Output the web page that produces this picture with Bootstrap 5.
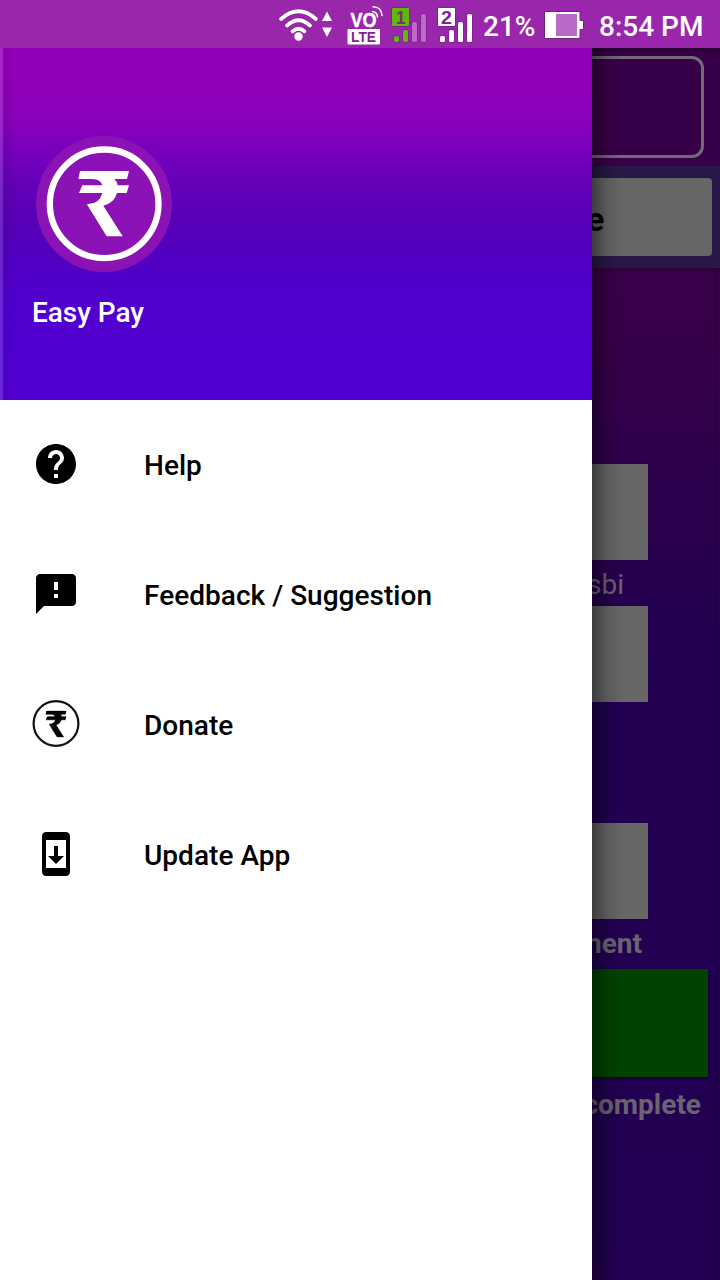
<!DOCTYPE html>
<html lang="en">
<head>
<meta charset="utf-8">
<meta name="viewport" content="width=device-width, initial-scale=1">
<title>Easy Pay</title>
<link rel="stylesheet" href="https://cdn.jsdelivr.net/npm/bootstrap@5.3.0/dist/css/bootstrap.min.css">
<style>
body{font-family:Roboto,"Liberation Sans",sans-serif;width:720px;height:1280px;background:#fff;color:#000}
svg{display:block;flex:none}
.status{height:48px;background:#9a27ab;color:#fff;font-size:28px;font-weight:500;line-height:54px}
.drawer{width:592px;background:#fff}
.drawer-head{height:352px;padding:88px 32px 0 36px;
 background:linear-gradient(90deg,#ffffff28 0 2px,#ffffff10 3px,#00000018 4px,#0000000a 10px,transparent 18px),
 linear-gradient(#9300b9 0,#9300b9 30px,#8b00bd 72px,#7600bd 105px,#6200b8 140px,#5700b8 175px,#5100c4 215px,#5100d0 255px,#5300d2 352px)}
.app-title{color:#fff;font-size:28px;font-weight:500;line-height:34px;margin:24px 0 0 -4px;letter-spacing:-.05px}
.drawer-list .list-group-item{height:130px;padding:0 32px;border:0;color:#000;font-size:28px;font-weight:500;gap:64px;background:none}
.drawer-list svg{margin-bottom:2px}
.drawer-list span{padding-top:2px;letter-spacing:.03px}
.behind{width:128px;background:#220052}
.behind-top{height:118px;padding:8px 16px 8px 0;background:linear-gradient(#2b0036,#39004a 8px)}
.outline-box{border:3px solid #726a76;border-left:0;border-radius:0 12px 12px 0}
.behind-tab{height:102px;padding:12px 8px 12px 0;background:#281848}
.tab-btn{background:#666;border-radius:0 4px 4px 0;color:#000;font-size:34px;font-weight:700;line-height:82px;height:78px}
.behind-form{height:1012px;background:linear-gradient(90deg,transparent 122px,#0002 123px 125px,transparent 126px),linear-gradient(#2f003a 0,#3a0049 5px,#38004a 100px,#2c004c 210px,#2a004d 270px,#240050 350px,#210052 440px,#220053 1012px)}
.field{width:56px;height:96px;background:#666}
.hint{font-size:28px;height:46px;line-height:50px;color:#6b6470;width:128px;direction:rtl;white-space:nowrap}
.pay{width:116px;height:108px;background:#004200;box-shadow:0 2px 3px #0006}
.edge-shade{width:30px;left:0;top:0;height:100%;background:linear-gradient(90deg,#0006,#0002 50%,transparent)}
</style>
<script src="https://cdn.jsdelivr.net/npm/bootstrap@5.3.0/dist/js/bootstrap.bundle.min.js"></script>
</head>
<body class="overflow-hidden">
<svg width="0" height="0" class="position-absolute" aria-hidden="true">
 <symbol id="rupee" viewBox="160 132 158 202">
  <path d="M168 135H315L309 159H271Q280 167 281 178H315L308 201H279Q270 232 238 239L296 331H248L190 237V234Q226 235 235 201H165L175 178H235Q230 160 206 159H163Z" fill="currentColor"/>
 </symbol>
</svg>

<header class="status d-flex">
 <svg width="483" height="48" viewBox="0 0 483 48" fill="none" stroke-linecap="round">
  <path d="M281 19Q298.500 3.500 316 19M287 25.500Q298.500 15 310 25.500M292.500 31.500Q298.500 26 304.500 31.500" stroke="#7b1d8a" stroke-width="5"/>
  <path d="M281 19Q298.500 3.500 316 19M287 25.500Q298.500 15 310 25.500M292.500 31.500Q298.500 26 304.500 31.500" stroke="#fff" stroke-width="3.800"/>
  <circle cx="298.500" cy="36.500" r="4.200" fill="#fff"/>
  <path d="M327 11.500L332 21H322ZM327 37L332 27.500H322Z" fill="#fff"/>
  <text x="350.500" y="27" font-family="Liberation Sans" font-weight="700" font-size="20" textLength="26" lengthAdjust="spacingAndGlyphs" fill="#fff" stroke="#fff" stroke-width=".5">VO</text>
  <g stroke="#fff" stroke-width="1.600"><path d="M372.500 11.500Q377 12 377.500 17M373 6.800Q381.500 7 382 15.500"/></g>
  <rect x="347.500" y="29" width="32.500" height="15.500" rx="1" fill="#fff"/>
  <text x="351" y="42" font-family="Liberation Sans" font-weight="700" font-size="14" textLength="25" lengthAdjust="spacingAndGlyphs" fill="#84218f">LTE</text>
  <g stroke="#7b1d8a" stroke-width="1.400" paint-order="stroke">
   <g fill="#5fb90b">
    <rect x="392" y="8" width="17" height="18" rx="1"/>
    <rect x="394" y="36" width="5" height="6" rx="1.500"/>
    <rect x="403" y="30" width="5" height="12" rx="1.500"/>
   </g>
   <g fill="#bd69c9">
    <rect x="412" y="22" width="5" height="20" rx="1.500"/>
    <rect x="421" y="14" width="5" height="28" rx="1.500"/>
   </g>
   <g fill="#fff">
    <rect x="438" y="8" width="17" height="18" rx="1"/>
    <rect x="440" y="36" width="5" height="6" rx="1.500"/>
    <rect x="449" y="30" width="5" height="12" rx="1.500"/>
    <rect x="458" y="22" width="5" height="20" rx="1.500"/>
    <rect x="467" y="14" width="5" height="28" rx="1.500"/>
   </g>
  </g>
  <text x="396" y="23.500" font-family="Liberation Sans" font-weight="700" font-size="19" textLength="9.500" lengthAdjust="spacingAndGlyphs" fill="#76307c">1</text>
  <text x="441" y="23.500" font-family="Liberation Sans" font-weight="700" font-size="19" textLength="11" lengthAdjust="spacingAndGlyphs" fill="#84218f">2</text>
 </svg>
 <span style="width:61px">21%</span>
 <svg width="55" height="48" viewBox="544 0 55 48">
  <path d="M544.500 11.500H580V20.500H583.500V29.500H580V38.500H544.500Z" fill="#fff" stroke="#74207f"/>
  <rect x="556" y="14" width="21" height="22" fill="#b868c6"/>
 </svg>
 <span class="text-nowrap">8:54 PM</span>
</header>

<div class="d-flex">
 <aside class="drawer">
  <div class="drawer-head">
   <svg width="136" height="136" viewBox="36 30 408 408" color="#fff">
    <circle cx="240" cy="234" r="204" fill="#8b13b5"/>
    <circle cx="240.500" cy="233.500" r="163" fill="none" stroke="#fff" stroke-width="19"/>
    <use href="#rupee" x="160" y="132" width="158" height="202"/>
   </svg>
   <div class="app-title">Easy Pay</div>
  </div>
  <nav class="drawer-list list-group list-group-flush">
   <a href="#" class="list-group-item d-flex align-items-center">
    <svg width="48" height="48" viewBox="0 0 24 24"><path d="M12 2C6.480 2 2 6.480 2 12s4.480 10 10 10 10-4.480 10-10S17.520 2 12 2zm1 17h-2v-2h2v2zm2.070-7.750l-.9.920C13.450 12.900 13 13.500 13 15h-2v-.5c0-1.100.45-2.100 1.170-2.830l1.240-1.260c.37-.36.590-.86.590-1.410 0-1.100-.9-2-2-2s-2 .9-2 2H8c0-2.210 1.790-4 4-4s4 1.790 4 4c0 .88-.36 1.680-.93 2.250z"/></svg>
    <span>Help</span></a>
   <a href="#" class="list-group-item d-flex align-items-center">
    <svg width="48" height="48" viewBox="0 0 24 24"><path d="M20 2H4c-1.100 0-1.990.9-1.990 2L2 22l4-4h14c1.100 0 2-.9 2-2V4c0-1.100-.9-2-2-2zm-7 12h-2v-2h2v2zm0-4h-2V6h2v4z"/></svg>
    <span>Feedback / Suggestion</span></a>
   <a href="#" class="list-group-item d-flex align-items-center">
    <svg width="48" height="48" viewBox="0 0 48 48"><circle cx="24" cy="23.500" r="22.400" fill="none" stroke="#111" stroke-width="2.200"/><g stroke="#000" stroke-width="5"><use href="#rupee" x="13.500" y="10.500" width="21" height="27"/></g></svg>
    <span>Donate</span></a>
   <a href="#" class="list-group-item d-flex align-items-center">
    <svg width="48" height="48" viewBox="0 0 24 24"><path d="M17 1.010L7 1c-1.100 0-2 .9-2 2v18c0 1.100.9 2 2 2h10c1.100 0 2-.9 2-2V3c0-1.100-.9-1.990-2-1.990zM17 19H7V5h10v14zm-1-6h-3V8h-2v5H8l4 4 4-4z"/></svg>
    <span>Update App</span></a>
  </nav>
 </aside>

 <main class="behind position-relative overflow-hidden">
  <div class="behind-top"><div class="outline-box h-100"></div></div>
  <div class="behind-tab"><div class="tab-btn"><span class="d-block" style="margin-left:-6px">e</span></div></div>
  <div class="behind-form">
   <div style="height:196px"></div>
   <div class="field"></div>
   <div class="hint" style="padding-right:96px">sbi</div>
   <div class="field"></div>
   <div style="height:121px"></div>
   <div class="field"></div>
   <div class="hint fw-bold" style="padding-right:78px;height:50px">ment</div>
   <div class="pay"></div>
   <div class="hint fw-bold" style="padding-right:19px;line-height:56px">complete</div>
  </div>
  <div class="edge-shade position-absolute"></div>
 </main>
</div>
</body>
</html>
